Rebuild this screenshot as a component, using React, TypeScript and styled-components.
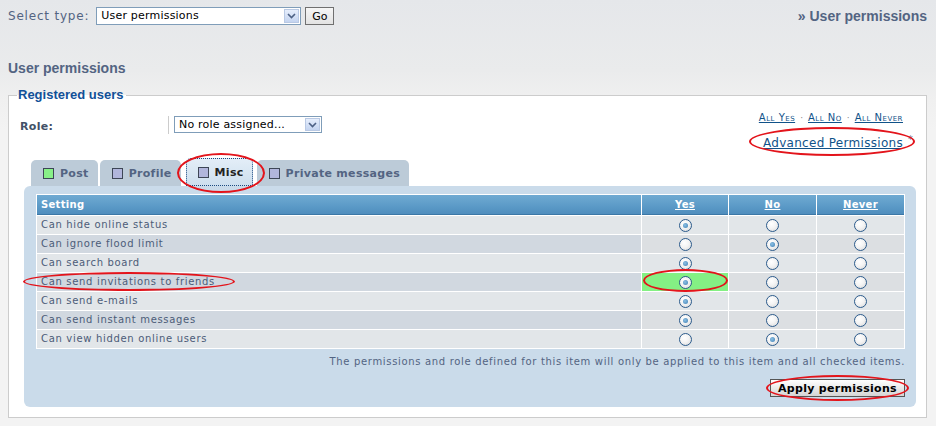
import React from "react";
import styled, { createGlobalStyle } from "styled-components";

const Global = createGlobalStyle`
  html, body { margin: 0; padding: 0; }
  body {
    background: #f3f3f3;
    font-family: "DejaVu Sans", Verdana, sans-serif;
  }
`;

const Page = styled.div`
  position: relative;
  width: 936px;
  height: 426px;
  box-sizing: border-box;
  padding: 7px 9px 0 8px;
  background: linear-gradient(#e5e7ea 0px, #eaebec 70px, #f0f0f0 100px, #f3f3f3 130px);
  overflow: hidden;
`;

const TopBar = styled.div`
  display: flex;
  align-items: center;
  justify-content: space-between;
  height: 18px;
`;

const TopLeft = styled.div`
  display: flex;
  align-items: center;
`;

const TopLabel = styled.span`
  font-size: 12px;
  color: #536482;
  margin-right: 7px;
  letter-spacing: 0.8px;
`;

const SelectBox = styled.div<{ $w: number; $h: number }>`
  position: relative;
  box-sizing: border-box;
  width: ${(p) => p.$w}px;
  height: ${(p) => p.$h}px;
  border: 1px solid #7f9db9;
  background: #fff;
  font-family: "DejaVu Sans", Verdana, sans-serif;
  font-size: 11px;
  color: #000;
  line-height: ${(p) => p.$h - 2}px;
  padding-left: 4px;
  letter-spacing: 0.2px;
`;

const SelectArrow = styled.span`
  position: absolute;
  right: 1px;
  top: 1px;
  bottom: 1px;
  width: 15px;
  box-sizing: border-box;
  border: 1px solid #b9c9e4;
  background: linear-gradient(#e6eefc, #c4d4f0);
  display: flex;
  align-items: center;
  justify-content: center;
`;

const GoButton = styled.button`
  margin-left: 4px;
  height: 18px;
  width: 29px;
  padding: 0;
  border: 1px solid #707070;
  background: linear-gradient(#f6f6f6, #e3e3e3);
  font-family: "DejaVu Sans", Verdana, sans-serif;
  font-size: 11px;
  color: #000;
`;

const Crumb = styled.span`
  font-family: "Liberation Sans", Arial, sans-serif;
  font-weight: bold;
  font-size: 14px;
  color: #536482;
  margin-top: -1px;
`;

const Heading = styled.h1`
  margin: 35px 0 0 0;
  font-family: "Liberation Sans", Arial, sans-serif;
  font-weight: bold;
  font-size: 14px;
  line-height: 16px;
  color: #536482;
`;

const Fieldset = styled.fieldset`
  margin: 12px 0 0 0;
  padding: 0 10px 10px 0;
  border: 1px solid #cccccc;
  background: #ffffff;
  min-width: 0;
`;

const Legend = styled.legend`
  margin-left: 8px;
  padding: 0 2px 0 1px;
  font-family: "Liberation Sans", Arial, sans-serif;
  font-weight: bold;
  font-size: 13px;
  line-height: 14px;
  color: #115098;
`;

const RoleRow = styled.div`
  display: flex;
  justify-content: space-between;
  margin-top: 14px;
  padding-left: 11px;
  height: 44px;
`;

const RoleLeft = styled.div`
  display: flex;
  align-items: flex-start;
`;

const RoleLabel = styled.span`
  width: 148px;
  font-size: 11px;
  font-weight: bold;
  color: #425067;
  line-height: 17px;
  margin-top: 2px;
  letter-spacing: 0.3px;
`;

const RoleSep = styled.span`
  width: 1px;
  height: 18px;
  background: #cccccc;
  margin-right: 5px;
`;

const LinksCol = styled.div`
  display: flex;
  flex-direction: column;
  align-items: flex-end;
  padding-right: 13px;
  margin-top: -4px;
`;

const SmallLinks = styled.div`
  font-size: 9px;
  color: #536482;
  line-height: 12px;
`;

const Link = styled.a`
  color: #105289;
  text-decoration: underline;
  font-variant: small-caps;
  font-size: 10px;
  letter-spacing: 0.5px;
`;

const Dot = styled.span`
  color: #888;
  margin: 0 5px;
`;

const AdvRow = styled.div`
  position: relative;
  margin-top: 12px;
  font-size: 12px;
  line-height: 15px;
`;

const AdvLink = styled.a`
  color: #105289;
  text-decoration: underline;
  letter-spacing: 0.3px;
`;

const Star = styled.span`
  position: absolute;
  right: -10px;
  top: -4px;
  font-size: 10px;
  color: #6b7b96;
`;

const Tabs = styled.div`
  display: flex;
  margin-left: 22px;
  height: 26px;
  align-items: flex-end;
`;

const Tab = styled.div<{ $active?: boolean }>`
  display: flex;
  align-items: center;
  box-sizing: border-box;
  height: ${(p) => (p.$active ? 28 : 26)}px;
  margin-right: ${(p) => (p.$active ? 4 : 2)}px;
  margin-left: ${(p) => (p.$active ? 3 : 0)}px;
  padding: 0 9px 0 12px;
  border-radius: 5px 5px 0 0;
  background: ${(p) =>
    p.$active ? "linear-gradient(#e4eef8, #cddfee)" : "#bccbd8"};
  outline: ${(p) => (p.$active ? "1px dotted #1d4a80" : "none")};
  outline-offset: -1px;
  font-size: 11px;
  font-weight: bold;
  color: ${(p) => (p.$active ? "#222" : "#536482")};
  letter-spacing: 0.3px;
`;

const TabIcon = styled.span<{ $color: string }>`
  width: 9px;
  height: 9px;
  border: 1px solid #3d4656;
  background: ${(p) => p.$color};
  margin-right: 6px;
`;

const Panel = styled.div`
  margin-left: 15px;
  padding: 8px 11px 10px 12px;
  background: #cadbea;
  border-radius: 6px;
`;

const Grid = styled.table`
  width: 100%;
  table-layout: fixed;
  border-collapse: separate;
  border-spacing: 1px;
  background: #ffffff;
`;

const HeadCell = styled.th<{ $left?: boolean }>`
  height: 19px;
  padding: 0 4px;
  background: linear-gradient(#70aad2, #5b9ac7 60%, #4f8dbd);
  border-bottom: 1px solid #3b77a6;
  color: #ffffff;
  font-size: 10px;
  font-weight: bold;
  text-align: ${(p) => (p.$left ? "left" : "center")};
  text-decoration: ${(p) => (p.$left ? "none" : "underline")};
  letter-spacing: 0.3px;
`;

const Cell = styled.td<{ $even?: boolean; $setting?: boolean; $hl?: boolean }>`
  height: 18px;
  padding: 0 4px;
  background: ${(p) =>
    p.$hl ? "#84f084" : p.$even ? (p.$setting ? "#d1d8e0" : "#dcdfe2") : "#e2e6e9"};
  color: #4c5c78;
  font-size: 10px;
  letter-spacing: 0.68px;
  text-align: ${(p) => (p.$setting ? "left" : "center")};
  vertical-align: middle;
  line-height: 12px;
`;

const Radio = styled.span<{ $on?: boolean }>`
  display: inline-block;
  position: relative;
  box-sizing: border-box;
  width: 13px;
  height: 13px;
  border-radius: 50%;
  border: 1px solid #2c5b8c;
  background: radial-gradient(circle at 40% 35%, #ffffff 0%, #f4f4f4 45%, #d6d6d6 100%);
  vertical-align: middle;
  &::after {
    content: "";
    display: ${(p) => (p.$on ? "block" : "none")};
    position: absolute;
    left: 3px;
    top: 3px;
    width: 5px;
    height: 5px;
    border-radius: 50%;
    background: radial-gradient(circle at 40% 40%, #8cc0e4, #3f7fb4);
  }
`;

const Note = styled.div`
  margin-top: 6px;
  text-align: right;
  font-size: 10px;
  letter-spacing: 0.67px;
  line-height: 14px;
  color: #536482;
`;

const ButtonRow = styled.div`
  display: flex;
  justify-content: flex-end;
  margin-top: 10px;
`;

const ApplyButton = styled.button`
  height: 18px;
  width: 135px;
  padding: 0;
  border: 1px solid #555;
  background: linear-gradient(#ffffff, #e6e6e6 60%, #d4d4d4);
  font-family: "DejaVu Sans", Verdana, sans-serif;
  font-size: 11px;
  font-weight: bold;
  color: #000;
  letter-spacing: 0.3px;
`;

const Ring = styled.div`
  position: absolute;
  box-sizing: border-box;
  border: 2px solid #e3141b;
  border-radius: 50%;
  pointer-events: none;
`;

const Arrow = () => (
  <svg width="9" height="6" viewBox="0 0 9 6">
    <path d="M1 1 L4.5 4.5 L8 1" fill="none" stroke="#4d6185" strokeWidth="1.6" />
  </svg>
);

type Row = { label: string; value: 0 | 1 | 2; hl?: boolean };

const rows: Row[] = [
  { label: "Can hide online status", value: 0 },
  { label: "Can ignore flood limit", value: 1 },
  { label: "Can search board", value: 0 },
  { label: "Can send invitations to friends", value: 0, hl: true },
  { label: "Can send e-mails", value: 0 },
  { label: "Can send instant messages", value: 0 },
  { label: "Can view hidden online users", value: 1 },
];

const rings = [
  { l: 749, t: 127, w: 166, h: 29 },
  { l: 177, t: 153, w: 88, h: 40 },
  { l: 23, t: 272, w: 212, h: 19 },
  { l: 643, t: 269, w: 85, h: 23 },
  { l: 766, t: 375, w: 143, h: 26 },
];

export default function App() {
  return (
    <>
      <Global />
      <Page>
        <TopBar>
          <TopLeft>
            <TopLabel>Select type:</TopLabel>
            <SelectBox $w={205} $h={18}>
              User permissions
              <SelectArrow>
                <Arrow />
              </SelectArrow>
            </SelectBox>
            <GoButton>Go</GoButton>
          </TopLeft>
          <Crumb>» User permissions</Crumb>
        </TopBar>

        <Heading>User permissions</Heading>

        <Fieldset>
          <Legend>Registered users</Legend>
          <RoleRow>
            <RoleLeft>
              <RoleLabel>Role:</RoleLabel>
              <RoleSep />
              <SelectBox $w={148} $h={17}>
                No role assigned...
                <SelectArrow>
                  <Arrow />
                </SelectArrow>
              </SelectBox>
            </RoleLeft>
            <LinksCol>
              <SmallLinks>
                <Link href="#">All Yes</Link>
                <Dot>·</Dot>
                <Link href="#">All No</Link>
                <Dot>·</Dot>
                <Link href="#">All Never</Link>
              </SmallLinks>
              <AdvRow>
                <AdvLink href="#">Advanced Permissions</AdvLink>
                <Star>*</Star>
              </AdvRow>
            </LinksCol>
          </RoleRow>

          <Tabs>
            <Tab>
              <TabIcon $color="#88f088" />
              Post
            </Tab>
            <Tab>
              <TabIcon $color="#b1b6dc" />
              Profile
            </Tab>
            <Tab $active>
              <TabIcon $color="#b1b6dc" />
              Misc
            </Tab>
            <Tab>
              <TabIcon $color="#b1b6dc" />
              Private messages
            </Tab>
          </Tabs>

          <Panel>
            <Grid>
              <colgroup>
                <col />
                <col style={{ width: 86 }} />
                <col style={{ width: 87 }} />
                <col style={{ width: 87 }} />
              </colgroup>
              <thead>
                <tr>
                  <HeadCell $left>Setting</HeadCell>
                  <HeadCell>Yes</HeadCell>
                  <HeadCell>No</HeadCell>
                  <HeadCell>Never</HeadCell>
                </tr>
              </thead>
              <tbody>
                {rows.map((r, i) => {
                  const even = i % 2 === 1;
                  return (
                    <tr key={r.label}>
                      <Cell $even={even} $setting>
                        {r.label}
                      </Cell>
                      {[0, 1, 2].map((c) => (
                        <Cell key={c} $even={even} $hl={r.hl && c === 0}>
                          <Radio $on={r.value === c} />
                        </Cell>
                      ))}
                    </tr>
                  );
                })}
              </tbody>
            </Grid>
            <Note>
              The permissions and role defined for this item will only be applied to this
              item and all checked items.
            </Note>
            <ButtonRow>
              <ApplyButton>Apply permissions</ApplyButton>
            </ButtonRow>
          </Panel>
        </Fieldset>

        {rings.map((r, i) => (
          <Ring
            key={i}
            style={{ left: r.l, top: r.t, width: r.w, height: r.h }}
          />
        ))}
      </Page>
    </>
  );
}
